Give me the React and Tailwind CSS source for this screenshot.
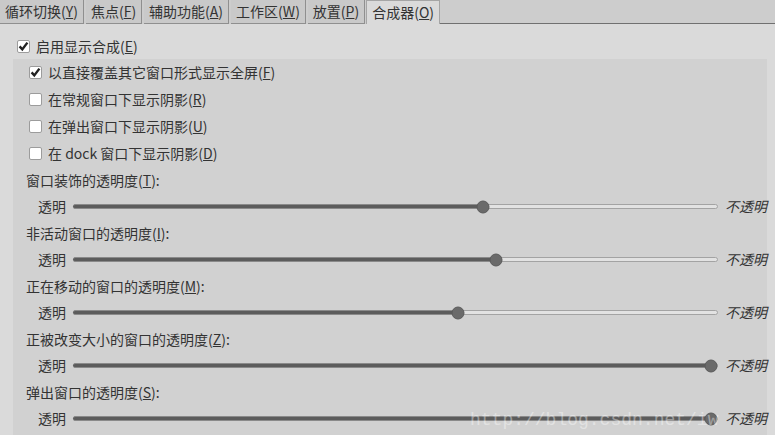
import React from 'react';

const tabs = [
  { label: '循环切换', key: 'Y' },
  { label: '焦点', key: 'F' },
  { label: '辅助功能', key: 'A' },
  { label: '工作区', key: 'W' },
  { label: '放置', key: 'P' },
  { label: '合成器', key: 'O', active: true },
];

const checks = [
  { label: '以直接覆盖其它窗口形式显示全屏', key: 'F', checked: true },
  { label: '在常规窗口下显示阴影', key: 'R' },
  { label: '在弹出窗口下显示阴影', key: 'U' },
  { label: '在 dock 窗口下显示阴影', key: 'D' },
];

const sliders = [
  { label: '窗口装饰的透明度', key: 'T', value: 63.6 },
  { label: '非活动窗口的透明度', key: 'I', value: 65.7 },
  { label: '正在移动的窗口的透明度', key: 'M', value: 59.7 },
  { label: '正被改变大小的窗口的透明度', key: 'Z', value: 99 },
  { label: '弹出窗口的透明度', key: 'S', value: 99 },
];

const Checkbox = ({ checked }) => (
  <span className="w-[13px] h-[13px] shrink-0 rounded-[2px] border border-[#9c9c9c] bg-white flex items-center justify-center">
    {checked && (
      <svg width="11" height="11" viewBox="0 0 11 11">
        <path d="M1.6 5.4 L4.3 8.4 L9.4 1.6" fill="none" stroke="#222" strokeWidth="2.4" />
      </svg>
    )}
  </span>
);

const Slider = ({ value }) => (
  <div className="relative flex-1 h-[5px] mx-[7px] rounded-full border border-[#a3a3a3] bg-[#e2e2e2]">
    <div className="absolute left-[-1px] top-[-1px] bottom-[-1px] rounded-full bg-[#5c5c5c] border-y border-[#8a8a8a]" style={{ width: `${value}%` }} />
    <div
      className="absolute top-1/2 w-[13px] h-[13px] -translate-x-1/2 -translate-y-1/2 rounded-full bg-[#6a6a6a] border border-[#5a5a5a]"
      style={{ left: `${value}%` }}
    />
  </div>
);

const App = () => {
  return (
    <div
      className="relative w-[775px] h-[435px] overflow-hidden bg-[#dadada] text-[14px] text-[#333]"
      style={{ fontFamily: '"Noto Sans CJK SC", "Noto Sans", sans-serif' }}
    >
      {/* tab bar */}
      <div className="flex h-[24px] bg-[#cdcdcd]">
        {tabs.map((t) =>
          t.active ? (
            <div key={t.key} className="flex items-center px-[5px] bg-[#dadada] border-x border-t border-[#a5a5a5] -ml-px">
              {t.label}(<u>{t.key}</u>)
            </div>
          ) : (
            <div key={t.key} className="flex items-center px-[5px] mr-[2px] bg-[#c9c9c9] border-r border-b border-[#8f8f8f]">
              {t.label}(<u>{t.key}</u>)
            </div>
          )
        )}
        <div className="flex-1 border-b border-[#707070]" />
      </div>

      <div className="pt-[12px]">
        <div className="flex items-center h-[20px] pl-[17px] gap-[6px]">
          <Checkbox checked />
          <span>启用显示合成(<u>E</u>)</span>
        </div>

        <div className="mt-[3px] ml-[13px] w-[754px] h-[400px] bg-[#d1d1d1]">
          {checks.map((c) => (
            <div key={c.key} className="flex items-center h-[27px] pl-[16px] gap-[6px]">
              <Checkbox checked={c.checked} />
              <span>{c.label}(<u>{c.key}</u>)</span>
            </div>
          ))}
          {sliders.map((s) => (
            <React.Fragment key={s.key}>
              <div className="flex items-center h-[26.5px] pl-[13px]">
                {s.label}(<u>{s.key}</u>):
              </div>
              <div className="flex items-center h-[26.5px] pl-[25px]">
                <span>透明</span>
                <Slider value={s.value} />
                <span className="italic">不透明</span>
              </div>
            </React.Fragment>
          ))}
        </div>
      </div>

      <div
        className="absolute left-[470px] top-[407px] text-[18px] text-white/40 pointer-events-none"
        style={{ fontFamily: '"Liberation Mono", monospace' }}
      >
        http://blog.csdn.net/iw
      </div>
    </div>
  );
};

export default App;
